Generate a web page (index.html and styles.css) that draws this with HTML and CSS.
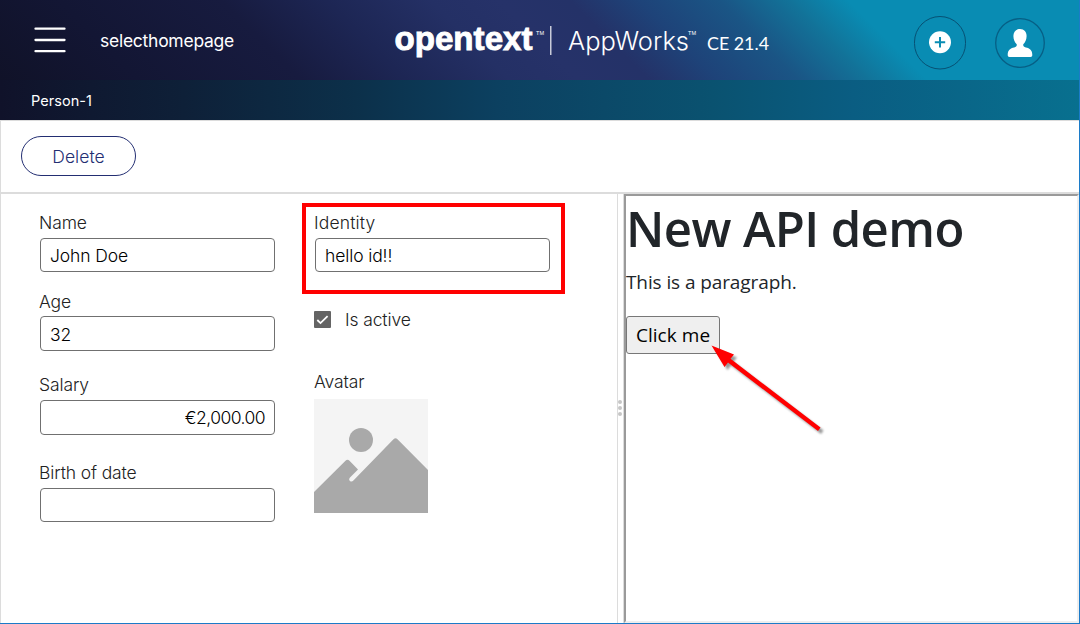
FILE: index.html
```html
<!DOCTYPE html>
<html lang="en">
<head>
<meta charset="utf-8">
<title>Person-1</title>
<link rel="stylesheet" href="styles.css">
</head>
<body>
<div class="window">
  <header class="topbar">
    <svg class="menu" viewBox="0 0 32 28" width="32" height="28"><path d="M1.500 2.700h29M1.500 14h29M1.500 25.200h29" stroke="#fff" stroke-width="2.300" stroke-linecap="round"/></svg>
    <span class="home">selecthomepage</span>
    <svg class="brand" viewBox="0 0 380 40" width="380" height="40" fill="#fff">
      <text class="brand-bold" x="2.500" y="30" textLength="138" lengthAdjust="spacingAndGlyphs">opentext</text>
      <text class="brand-tm" x="144" y="15" textLength="8" lengthAdjust="spacingAndGlyphs">TM</text>
      <rect x="158" y="6" width="1.500" height="29" opacity=".75"/>
      <text class="brand-product" x="176" y="29.500" textLength="121" lengthAdjust="spacingAndGlyphs">AppWorks</text>
      <text class="brand-tm" x="296" y="15" textLength="8" lengthAdjust="spacingAndGlyphs">TM</text>
      <text class="brand-version" x="315" y="29.500" textLength="62" lengthAdjust="spacingAndGlyphs">CE 21.4</text>
    </svg>
    <svg class="add" viewBox="0 0 52 54" width="52" height="54"><rect x=".5" y=".5" width="51" height="52.500" rx="25.500" fill="none" stroke="#075174"/><circle cx="26" cy="26.200" r="11" fill="#fff"/><path d="M26 21v10.400M20.800 26.200h10.400" stroke="#098cb3" stroke-width="2"/></svg>
    <svg class="user" viewBox="0 0 50 50" width="50" height="50"><circle cx="25" cy="25" r="24.300" fill="none" stroke="#075f85" stroke-width="1.300"/><path d="M25 11c-4.200 0-6.600 3-6.600 7 0 3.500 1.400 6.500 3.300 8.200.4 2-.5 2.600-2.500 3.300-4 .8-6.500 2.500-6.500 7.500 0 1.300.6 2 1.800 2h21c1.200 0 1.800-.7 1.800-2 0-5-2.500-6.700-6.500-7.500-2-.7-2.900-1.300-2.500-3.300 1.900-1.700 3.300-4.700 3.300-8.200 0-4-2.400-7-6.600-7z" fill="#fff"/></svg>
  </header>
  <div class="crumbs">Person-1</div>
  <div class="actions"><button class="delete">Delete</button></div>
  <main class="content">
    <section class="form">
      <div class="column">
        <div class="field name"><label>Name</label><div class="input">John Doe</div></div>
        <div class="field age"><label>Age</label><div class="input tall">32</div></div>
        <div class="field salary"><label>Salary</label><div class="input tall amount">€2,000.00</div></div>
        <div class="field birth"><label>Birth of date</label><div class="input"></div></div>
      </div>
      <div class="column second">
        <div class="field identity"><label>Identity</label><div class="input">hello id!!</div><div class="highlight"></div></div>
        <div class="check">
          <svg viewBox="0 0 17 17" width="17" height="17"><rect width="17" height="17" rx="1" fill="#646464"/><path d="M3.300 9l3.200 3.100 7.100-6.900" fill="none" stroke="#fff" stroke-width="1.800"/></svg>
          <span>Is active</span>
        </div>
        <div class="avatar"><label>Avatar</label>
          <svg viewBox="0 0 114 114" width="114" height="114"><path d="M0 0h114v114H0z" fill="#f4f4f4"/><circle cx="47" cy="41" r="12" fill="#a9a9a9"/><path d="M0 93l31.500-31.200q2-2 4 0L44 70.500l-8 8q-1.700 2 0 3.500 1.700 1.300 3.400-.5L79.500 40.200q2-2 4 0L114 71v43H0z" fill="#a9a9a9"/></svg>
        </div>
      </div>
    </section>
    <div class="splitter"><i></i><i></i><i></i></div>
    <section class="frame">
      <h1>New API demo</h1>
      <p>This is a paragraph.</p>
      <button class="click">Click me</button>
      <svg class="arrow" viewBox="0 0 120 96" width="120" height="96"><path d="M4.500 2.500l22.500 9-3.500 4.300L113.500 84.500l-2.500 3.500L21 19.500l-3.500 4.500z" fill="#ff0000"/></svg>
    </section>
  </main>
</div>
</body>
</html>
```
FILE: styles.css
```css
* { box-sizing: border-box; }
body { margin: 0; background: #fff; font: 300 17.500px/22px Inter, "Liberation Sans", Arial, sans-serif; letter-spacing: -.12px; color: #222; overflow: hidden; }
button { font: inherit; letter-spacing: inherit; }
.window { width: 1080px; height: 624px; display: flex; flex-direction: column; border-right: 1px solid #1c7bc8; border-bottom: 1px solid #1c7bc8; }

.topbar { flex: 0 0 80px; display: flex; align-items: flex-start; color: #fff; background: linear-gradient(45deg, #101228 0, #131634 12%, #171b3f 26%, #1d2654 35%, #243065 44%, #263269 50%, #243268 56%, #1e4379 62%, #1a5585 69%, #127399 75%, #098cb3 80%); }
.menu { margin: 26px 0 0 34px; }
.home { margin: 30px 0 0 34px; width: 160px; font-weight: 400; letter-spacing: -.26px; }
.brand { margin: 20px 0 0 132px; overflow: visible; letter-spacing: 0; }
.brand-bold { font: bold 34px "Liberation Sans", sans-serif; stroke: #fff; stroke-width: .9px; }
.brand-product { font: 300 25px Inter, sans-serif; }
.brand-version { font: 18px Lato, sans-serif; }
.brand-tm { font: 6px "Liberation Sans", sans-serif; }
.add { margin: 16px 0 0 142px; }
.user { margin: 18px 0 0 29px; }
.crumbs { flex: 0 0 40px; padding: 10px 0 0 31px; color: #fff; font-size: 14.500px; font-weight: 400; letter-spacing: .05px; background: linear-gradient(90deg, #10122a 0, #0e2038 17%, #0c304a 33%, #0c4060 46%, #0a5270 66%, #0a5d82 79%, #08708f 100%); }
.actions { flex: 0 0 74px; padding: 15px 0 0 20px; border: solid #dcdcdc; border-width: 1px 0 2px 1px; }
.delete { display: block; width: 115px; height: 40px; padding: 1px 0 0; border: 1px solid #232e72; border-radius: 20px; background: #fff; color: #232e72; letter-spacing: .05px; }

.content { flex: 1; display: flex; min-height: 0; }
.form { width: 618px; padding: 18px 0 0 38px; display: flex; gap: 39px; border: solid #dcdcdc; border-width: 0 1px 0 1px; }
.column { width: 236px; }
.field { position: relative; }
.input { width: 235px; height: 34px; margin: 4px 0 0 1px; padding: 6px 9px 0; border: 1px solid #707070; border-radius: 4px; color: #000; }
.input.tall { height: 35px; margin-top: 3px; padding-top: 7px; }
label { display: block; }
.identity label { letter-spacing: .15px; }
.age { margin-top: 19px; }
.salary { margin-top: 23px; }
.salary .input { margin-top: 4px; padding-top: 6px; letter-spacing: -.55px; }
.birth { margin-top: 27px; }
.amount { text-align: right; }
.highlight { position: absolute; left: -12px; top: -9px; width: 263px; height: 91px; border: 4px solid #ff0000; }
.check { display: flex; align-items: center; gap: 14px; margin-top: 36px; height: 22px; }
.check span { padding-top: 1px; }
.avatar { margin-top: 41px; }
.avatar svg { display: block; margin-top: 6px; }
.splitter { width: 6px; padding: 0 1px 2px 0; border-right: 1px solid #dcdcdc; display: flex; flex-direction: column; align-items: center; justify-content: center; gap: 2px; }
.splitter i { width: 4px; height: 4px; border-radius: 2px; background: #c6c6c6; }
.frame { position: relative; flex: 1; border: 2px solid #9a9a9a; border-right-color: #eee; border-bottom-color: #eee; font-family: "Open Sans", sans-serif; font-weight: 400; letter-spacing: 0; color: #212529; }
h1 { margin: 2px 0 0; font-size: 49px; line-height: 60px; font-weight: 600; letter-spacing: -.600px; }
p { margin: 9px 0 0; font-size: 19px; line-height: 30px; letter-spacing: -.1px; }
.click { display: block; width: 94px; height: 38px; margin-top: 19px; padding: 0; border: 1px solid #777; border-radius: 3px; background: #efefef; color: #000; font-size: 19px; font-weight: 400; line-height: 30px; letter-spacing: .05px; }
.arrow { position: absolute; left: 81px; top: 147px; filter: drop-shadow(3px 3px 1px rgba(0, 0, 0, .4)); }
```
